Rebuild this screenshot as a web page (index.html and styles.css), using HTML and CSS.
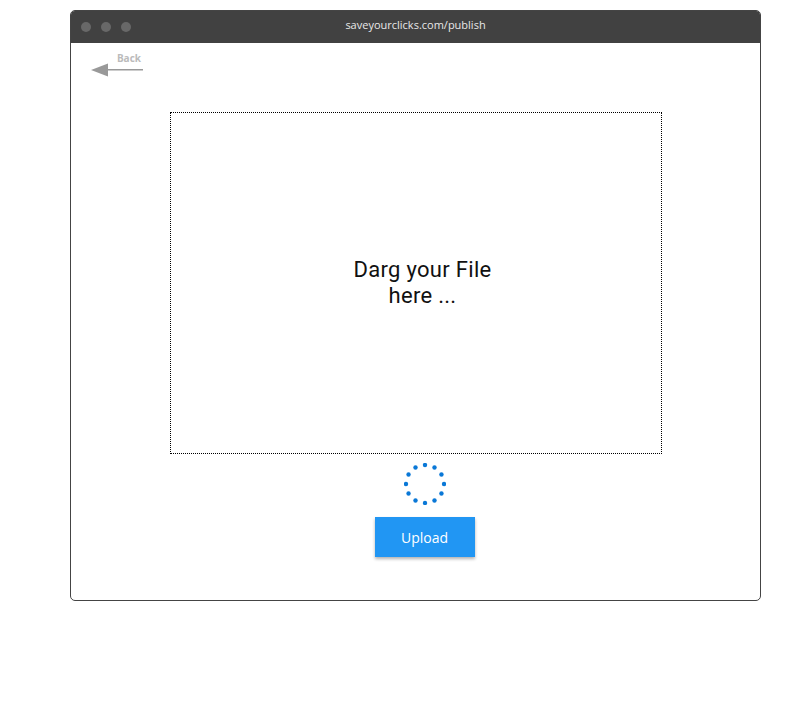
FILE: index.html
```html
<!DOCTYPE html>
<html>
<head>
<meta charset="utf-8">
<link rel="stylesheet" href="styles.css">
</head>
<body>
<div class="window">
  <div class="titlebar">
    <div class="lights"><span></span><span></span><span></span></div>
    <div class="url">saveyourclicks.com/publish</div>
  </div>
  <div class="content">
    <a class="back">
      <span class="back-label">Back</span>
      <svg class="back-arrow" width="54" height="14" viewBox="0 0 54 14">
        <polygon points="0,7 17,0.5 17,13.5" fill="#999"/>
        <rect x="16" y="6" width="36" height="1.5" fill="#999"/>
      </svg>
    </a>
    <div class="dropzone">
      <div class="drop-text">
        <div class="drop-line">Darg your File</div>
        <div class="drop-line">here ...</div>
      </div>
    </div>
    <div class="actions">
      <div class="spinner">
        <svg width="42" height="42" viewBox="-21 -21 42 42">
          <g fill="#0a78d7">
            <circle cx="0" cy="-19" r="2.2"/>
            <circle cx="9.5" cy="-16.45" r="2.2"/>
            <circle cx="16.45" cy="-9.5" r="2.2"/>
            <circle cx="19" cy="0" r="2.2"/>
            <circle cx="16.45" cy="9.5" r="2.2"/>
            <circle cx="9.5" cy="16.45" r="2.2"/>
            <circle cx="0" cy="19" r="2.2"/>
            <circle cx="-9.5" cy="16.45" r="2.2"/>
            <circle cx="-16.45" cy="9.5" r="2.2"/>
            <circle cx="-19" cy="0" r="2.2"/>
            <circle cx="-16.45" cy="-9.5" r="2.2"/>
            <circle cx="-9.5" cy="-16.45" r="2.2"/>
          </g>
        </svg>
      </div>
      <button class="upload">Upload</button>
    </div>
  </div>
</div>
</body>
</html>
```
FILE: styles.css
```css
html, body {
  margin: 0;
  padding: 0;
  background: #fff;
}
body {
  font-family: "Open Sans", "Noto Sans", sans-serif;
  padding: 10px 0 0 70px;
}
.window {
  width: 689px;
  height: 589px;
  border: 1px solid #444;
  border-radius: 5px;
  overflow: hidden;
  display: flex;
  flex-direction: column;
  box-sizing: content-box;
}
.titlebar {
  height: 33px;
  margin: -1px -1px 0 -1px;
  background: #414141;
  display: flex;
  align-items: center;
  position: relative;
  flex-shrink: 0;
}
.lights {
  display: flex;
  gap: 10px;
  padding-left: 11px;
}
.lights span {
  width: 10px;
  height: 10px;
  border-radius: 50%;
  background: #686868;
}
.url {
  position: absolute;
  left: 0;
  right: 0;
  text-align: center;
  color: #e8e8e8;
  font-size: 11px;
  top: 7px;
}
.content {
  display: flex;
  flex-direction: column;
  align-items: center;
  flex: 1;
}
.back {
  align-self: flex-start;
  margin: 8px 0 0 20px;
  display: flex;
  flex-direction: column;
  align-items: flex-end;
  width: 54px;
  height: 34px;
}
.back-label {
  font-size: 10px;
  font-weight: bold;
  color: #bbb;
  line-height: 14px;
  margin-right: 4px;
}
.back-arrow {
  display: block;
  margin-top: -2px;
}
.dropzone {
  margin-top: 27px;
  width: 490px;
  height: 340px;
  border: 1px dotted #000;
  display: flex;
  align-items: center;
  justify-content: center;
}
.drop-text {
  text-align: center;
  color: #111;
  padding-left: 14px;
  font-family: Roboto, "Open Sans", sans-serif;
}
.drop-line {
  font-size: 22px;
  line-height: 26px;
  letter-spacing: 0.3px;
}
.actions {
  display: flex;
  flex-direction: column;
  align-items: center;
  padding-left: 18px;
}
.spinner {
  margin-top: 9px;
  height: 42px;
}
.spinner svg { display: block; }
.upload {
  margin-top: 12px;
  width: 100px;
  height: 40px;
  border: none;
  background: #2196f3;
  color: #fff;
  font-family: "Open Sans", "Noto Sans", sans-serif;
  font-size: 14px;
  box-shadow: 0 2px 3px rgba(0,0,0,0.3);
}
```
